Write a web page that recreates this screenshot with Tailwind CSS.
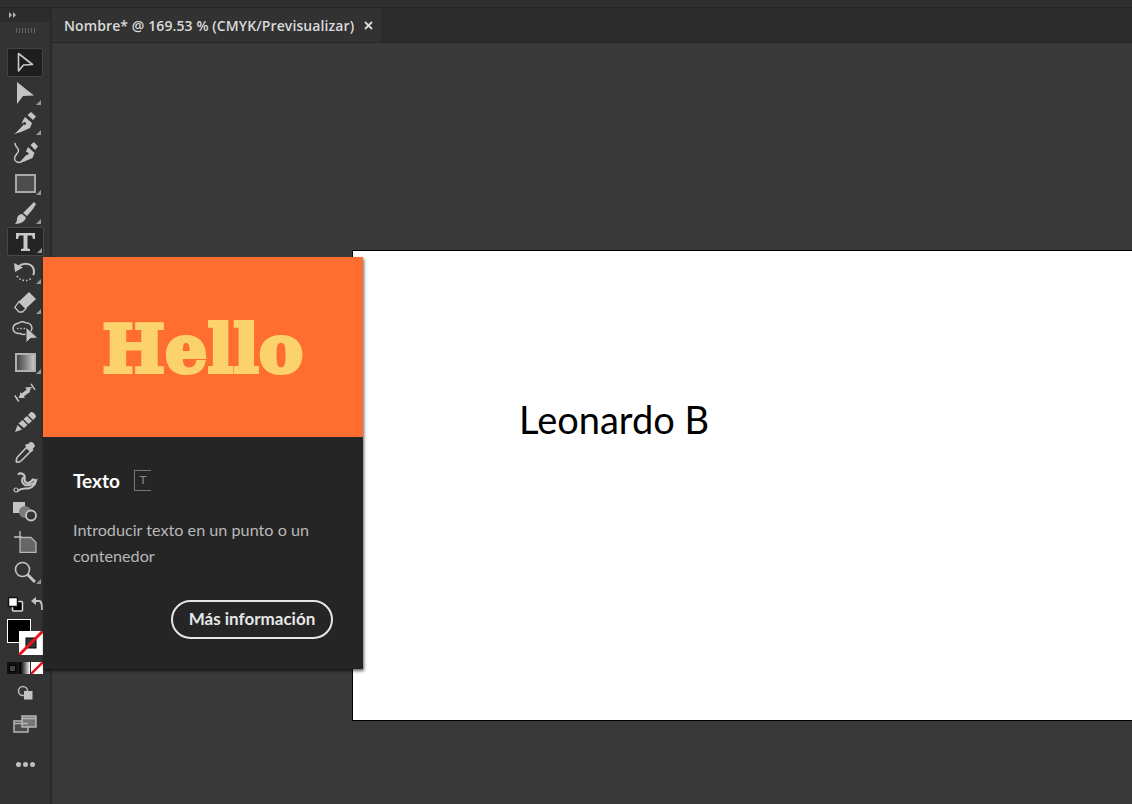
<!DOCTYPE html>
<html lang="es">
<head>
<meta charset="utf-8">
<script src="https://cdn.jsdelivr.net/npm/@tailwindcss/browser@4"></script>
<title>Illustrator</title>
</head>
<body class="m-0 overflow-hidden bg-[#393939]">
<div class="relative flex flex-col w-[1132px] h-[804px] overflow-hidden bg-[#393939] font-['Open_Sans',sans-serif]">
  <div class="h-[8px] shrink-0 bg-[#2f2f2f] border-b border-[#262626]"></div>
  <div class="flex flex-1 min-h-0">
    <!-- toolbar -->
    <aside class="w-[52px] shrink-0 flex flex-col bg-[#333333] border-r-2 border-[#2a2a2a] text-[#c2c2c2]">
      <div class="h-[14px] bg-[#2b2b2b] flex items-center pl-[9px] text-[#b5b5b5]">
        <svg width="8" height="6" viewBox="0 0 8 6" fill="currentColor"><path d="M0 0l3 3-3 3zM4 0l3 3-3 3z"/></svg>
      </div>
      <div class="h-[14px] mt-[1px] flex items-center justify-center gap-[2px]">
        <span class="w-[1px] h-[5px] bg-[#666]"></span><span class="w-[1px] h-[5px] bg-[#666]"></span><span class="w-[1px] h-[5px] bg-[#666]"></span><span class="w-[1px] h-[5px] bg-[#666]"></span><span class="w-[1px] h-[5px] bg-[#666]"></span><span class="w-[1px] h-[5px] bg-[#666]"></span><span class="w-[1px] h-[5px] bg-[#666]"></span>
      </div>
      <div class="flex flex-col items-center mt-[11px]">
        <!-- selection -->
        <div class="w-[36px] h-[29px] rounded-[2px] bg-[#1e1e1e] border border-[#444] flex items-center justify-center mb-[1px]">
          <svg width="17" height="21" viewBox="0 0 17 21" fill="none" stroke="#c8c8c8" stroke-width="1.600"><path d="M1.500 1.500V19l5-6 9-.5z" stroke-linejoin="round"/></svg>
        </div>
        <!-- direct -->
        <div class="relative w-[36px] h-[30px] flex items-center justify-center">
          <svg width="17" height="22" viewBox="0 0 17 22" fill="#c4c4c4"><path d="M0 0V22l6-8 11-.5z"/></svg>
          <span class="absolute right-[2px] bottom-[3px] w-0 h-0 border-l-[5px] border-l-transparent border-b-[5px] border-b-[#999]"></span>
        </div>
        <!-- pen -->
        <div class="relative w-[36px] h-[30px] flex items-center justify-center">
          <svg width="22" height="22" viewBox="0 0 22 22"><path d="M13.500 3L17 0l5 4.500-3 3.500z" fill="#c4c4c4"/><path d="M11 5l7 6-2 5-9 4-7 2 9-9.500-1-2.500z" fill="#c4c4c4"/><path d="M1 21l8.500-8.500" stroke="#333" stroke-width="1"/><circle cx="10.500" cy="11.500" r="1.500" fill="#333"/></svg>
          <span class="absolute right-[2px] bottom-[3px] w-0 h-0 border-l-[5px] border-l-transparent border-b-[5px] border-b-[#999]"></span>
        </div>
        <!-- curvature -->
        <div class="relative w-[36px] h-[30px] flex items-center justify-center">
          <svg width="25" height="22" viewBox="0 0 25 22"><path d="M17.500 3L21 0l4 4.500-3 3.500z" fill="#c4c4c4"/><path d="M15 5l6.500 6-2 5-8 3.500-5.500 1.500 8-9-1-2.500z" fill="#c4c4c4"/><path d="M5 20.500l7.500-8" stroke="#333" stroke-width="1"/><circle cx="14" cy="11.500" r="1.500" fill="#333"/><path d="M2.500 1c-2 3 3.500 4.500 3 8-.5 3-4.500 4-4 8 .5 3 4 4 7 3" fill="none" stroke="#c4c4c4" stroke-width="1.500"/></svg>
        </div>
        <!-- rectangle -->
        <div class="relative w-[36px] h-[30px] flex items-center justify-center">
          <span class="block w-[21px] h-[19px] bg-[#4d4d4d] border-2 border-[#a8a8a8]"></span>
          <span class="absolute right-[2px] bottom-[3px] w-0 h-0 border-l-[5px] border-l-transparent border-b-[5px] border-b-[#999]"></span>
        </div>
        <!-- brush -->
        <div class="relative w-[36px] h-[29px] flex items-center justify-center">
          <svg width="21" height="22" viewBox="0 0 21 22" fill="#c4c4c4"><path d="M19 0l2 2-3 5-6 7-4-3 6-6zM7 12l4 3.500c-1 3-3 6-11 6.500 1-1 2-3 2-5s2-5 5-5z"/></svg>
          <span class="absolute right-[2px] bottom-[3px] w-0 h-0 border-l-[5px] border-l-transparent border-b-[5px] border-b-[#999]"></span>
        </div>
        <!-- type -->
        <div class="relative w-[37px] h-[29px] rounded-[2px] bg-[#242424] border border-[#484848] flex items-center justify-center mb-[1px]">
          <svg width="19" height="18" viewBox="0 0 19 18" fill="#c8c8c8"><path d="M0 0h19v6h-2l-1-3.500h-4.500V15.500l2.500 .5v2H5v-2l2.500-.5V2.500H3L2 6H0z"/></svg>
          <span class="absolute right-[1px] bottom-[2px] w-0 h-0 border-l-[5px] border-l-transparent border-b-[5px] border-b-[#999]"></span>
        </div>
        <!-- rotate -->
        <div class="relative w-[36px] h-[30px] flex items-center justify-center">
          <svg width="22" height="22" viewBox="0 0 22 22" fill="none" stroke="#c4c4c4" stroke-width="2"><path d="M5 5c5-4 15-3 15 6 0 1 0 2-1 3"/><path d="M0 2l1 9 8-4.500z" fill="#c4c4c4" stroke="none"/><path d="M3 15c3 5 10 6 15 2" stroke-width="1.600" stroke-dasharray="1.500 2"/></svg>
          <span class="absolute right-[2px] bottom-[3px] w-0 h-0 border-l-[5px] border-l-transparent border-b-[5px] border-b-[#999]"></span>
        </div>
        <!-- eraser -->
        <div class="relative w-[36px] h-[30px] flex items-center justify-center">
          <svg width="22" height="21" viewBox="0 0 22 21"><path d="M15 0l7 7-10 9.500L5 9.500z" fill="#c4c4c4"/><path d="M5 9.500l7 7-3.500 3.500H5L.8 15.500z" fill="none" stroke="#c4c4c4" stroke-width="1.300"/></svg>
          <span class="absolute right-[2px] bottom-[3px] w-0 h-0 border-l-[5px] border-l-transparent border-b-[5px] border-b-[#999]"></span>
        </div>
        <!-- shape builder -->
        <div class="relative w-[36px] h-[30px] flex items-center justify-center">
          <svg width="26" height="22" viewBox="0 0 26 22" fill="none" stroke="#c4c4c4" stroke-width="1.500"><path d="M7 2c2-1.500 5-1.500 7 0 4-.5 6 2.500 6 5.500-1 4-4 6-8 6-2 0-3-.5-4-1-4 .5-7-2-7-5s3-5 6-5.500z"/><path d="M5 7.500h8" stroke-dasharray="1.500 1.800"/><path d="M14 6v16l4.500-4.500 7.500-.5z" fill="#c4c4c4" stroke="#333" stroke-width="1"/></svg>
        </div>
        <!-- gradient -->
        <div class="relative w-[36px] h-[30px] flex items-center justify-center">
          <span class="block w-[21px] h-[19px] border-2 border-[#b0b0b0] bg-gradient-to-r from-[#444444] to-[#c8c8c8]"></span>
          <span class="absolute right-[2px] bottom-[3px] w-0 h-0 border-l-[5px] border-l-transparent border-b-[5px] border-b-[#999]"></span>
        </div>
        <!-- width -->
        <div class="relative w-[36px] h-[30px] flex items-center justify-center">
          <svg width="22" height="19" viewBox="0 0 22 19" fill="none" stroke="#c4c4c4"><path d="M.8 12.500l4 6M17 .8l4 6" stroke-width="1.500"/><path d="M3 15.500L19 3.500" stroke-width="1" stroke-dasharray="1.500 1"/><path d="M8 12.500l6-4.500" stroke-width="3.500"/><path d="M5 15l1.500-6 4.500 6zM17 4l-1.500 6L11 4.500z" fill="#c4c4c4" stroke="none"/></svg>
        </div>
        <!-- blend stripes -->
        <div class="relative w-[36px] h-[30px] flex items-center justify-center">
          <svg width="21" height="20" viewBox="0 0 21 20" fill="#c4c4c4"><path d="M0 20l2.500-7 4.500 4.500zM3.500 11.500l4-3.500 5 5-3.500 3zM8.500 7l3.500-3 5 5-3.500 3zM13 3l3-3c2 0 5 2 5 5l-3 3z"/></svg>
        </div>
        <!-- eyedropper -->
        <div class="relative w-[36px] h-[30px] flex items-center justify-center">
          <svg width="21" height="22" viewBox="0 0 21 22"><path d="M14.500 1.500c2-2 6.500 1.500 5 4.500l-2 2 1 1-2 2-6.500-6.500 2-2 1 1z" fill="#c4c4c4"/><path d="M11.500 6.500l4 4-9 9c-2 2-3 2-5 1.500-.5-2-.5-3 1-5z" fill="none" stroke="#c4c4c4" stroke-width="1.600"/></svg>
        </div>
        <!-- symbol sprayer -->
        <div class="relative w-[36px] h-[30px] flex items-center justify-center">
          <svg width="25" height="21" viewBox="0 0 25 21" fill="none" stroke="#c4c4c4" stroke-width="2.200"><path d="M5 2.500c2-2 6-1 6.500 1.500s-1 5 1.500 6.500 5-.5 7-3l3 1"/><path d="M10 5c-1 3-2 6 2 8 4 1 8-1 11-4-1 5-6 8-11 7.500-2.500 0-5 .5-7.500 2.500" stroke-width="2"/><circle cx="3" cy="18" r="2" fill="#333" stroke-width="1.200"/></svg>
        </div>
        <!-- shapes -->
        <div class="relative w-[36px] h-[30px] flex items-center justify-center">
          <svg width="24" height="20" viewBox="0 0 24 20"><rect x="0" y="0" width="12" height="11" fill="#c4c4c4"/><circle cx="12" cy="10" r="6" fill="#7a7a7a"/><circle cx="18" cy="13.500" r="5" fill="#333" stroke="#c4c4c4" stroke-width="1.800"/></svg>
        </div>
        <!-- artboard -->
        <div class="relative w-[36px] h-[30px] flex items-center justify-center">
          <svg width="23" height="22" viewBox="0 0 23 22"><path d="M0 6h8M6 0v8" stroke="#c4c4c4" stroke-width="1.300"/><path d="M6 6.500h11l5 5v10H6z" fill="#666" stroke="#b5b5b5" stroke-width="1.300"/></svg>
        </div>
        <!-- zoom -->
        <div class="relative w-[36px] h-[30px] flex items-center justify-center">
          <svg width="22" height="22" viewBox="0 0 22 22" fill="none" stroke="#c4c4c4"><circle cx="8.500" cy="8.500" r="7" stroke-width="1.600"/><path d="M13.500 13.500l7.500 7.500" stroke-width="3"/></svg>
          <span class="absolute right-[2px] bottom-[3px] w-0 h-0 border-l-[5px] border-l-transparent border-b-[5px] border-b-[#999]"></span>
        </div>
        <!-- swaps -->
        <div class="w-[36px] h-[22px] mt-[6px] flex items-center justify-between">
          <svg width="17" height="16" viewBox="0 0 17 16"><rect x="5.500" y="5.500" width="10" height="9.500" rx="1" fill="#000" stroke="#ddd" stroke-width="1.500"/><rect x="1.500" y="1.500" width="9" height="9" rx="1" fill="#fff" stroke="#111" stroke-width="1.500"/></svg>
          <svg width="12" height="15" viewBox="0 0 12 15" fill="none" stroke="#c4c4c4" stroke-width="1.800"><path d="M4 4h4c3 0 3 4 3 9"/><path d="M5 0v8L0 4z" fill="#c4c4c4" stroke="none"/></svg>
        </div>
        <!-- fill/stroke -->
        <div class="relative w-[36px] h-[48px] mt-[1px]">
          <span class="absolute left-0 top-[3px] w-[24px] h-[24px] bg-black border border-white"></span>
          <svg class="absolute left-[12px] top-[15px]" width="24" height="24" viewBox="0 0 24 24"><rect width="24" height="24" fill="#fff"/><rect x="7" y="7" width="10" height="10" fill="#333" stroke="#000"/><path d="M0 24L24 0" stroke="#e8141c" stroke-width="3"/></svg>
        </div>
        <!-- modes -->
        <div class="flex w-[36px] h-[12px] gap-[1px] bg-[#222] mt-[-2px]">
          <span class="w-[11px] h-[12px] bg-[#111] flex items-center justify-center"><span class="block w-[7px] h-[7px] bg-[#444] border border-black"></span></span>
          <span class="w-[11px] h-[12px] bg-gradient-to-r from-black to-white"></span>
          <svg width="12" height="12" viewBox="0 0 12 12"><rect width="12" height="12" fill="#fff"/><path d="M0 12L12 0" stroke="#e8141c" stroke-width="2.500"/></svg>
        </div>
        <!-- draw mode -->
        <div class="h-[30px] w-[36px] mt-[3px] flex items-center justify-center">
          <svg width="16" height="15" viewBox="0 0 16 15"><circle cx="6" cy="6" r="4.500" fill="none" stroke="#bbb" stroke-width="1.500"/><rect x="7" y="6" width="8.500" height="8.500" fill="#c4c4c4"/></svg>
        </div>
        <!-- screen mode -->
        <div class="h-[30px] w-[36px] mt-[2px] flex items-center justify-center">
          <svg width="24" height="18" viewBox="0 0 24 18" fill="none" stroke="#b5b5b5" stroke-width="1.500"><rect x="1" y="6" width="14" height="11" fill="#4a4a4a"/><rect x="9" y="1" width="14" height="11" fill="#777"/><path d="M1 8.500h14M9 3.500h14"/></svg>
        </div>
        <!-- more -->
        <div class="h-[30px] w-[36px] mt-[10px] flex items-center justify-center gap-[2px]">
          <span class="w-[5px] h-[5px] rounded-full bg-[#c0c0c0]"></span>
          <span class="w-[5px] h-[5px] rounded-full bg-[#c0c0c0]"></span>
          <span class="w-[5px] h-[5px] rounded-full bg-[#c0c0c0]"></span>
        </div>
      </div>
    </aside>
    <!-- document -->
    <main class="flex-1 min-w-0 flex flex-col">
      <div class="h-[35px] shrink-0 flex bg-[#2b2b2b] border-b border-[#262626]">
        <div class="w-[329px] flex items-center bg-[#323232] pl-[12px] pt-[1px] gap-[10px] text-[#dadada]">
          <span class="text-[14px] font-semibold whitespace-nowrap leading-none tracking-[0.1px]">Nombre* @ 169.53 % (CMYK/Previsualizar)</span>
          <svg width="9" height="9" viewBox="0 0 9 9" fill="none" stroke="#dcdcdc" stroke-width="1.800"><path d="M1 1l7 7M8 1l-7 7"/></svg>
        </div>
      </div>
      <div class="flex-1 bg-[#393939] pt-[207px] pl-[300px]">
        <div class="w-[800px] h-[471px] bg-white border border-black pl-[166px] pt-[143px]">
          <p class="text-[38px] leading-[50px] text-black whitespace-nowrap font-['Lato',sans-serif]">Leonardo B</p>
        </div>
      </div>
    </main>
  </div>
  <!-- popover -->
  <div class="absolute left-[43px] top-[257px] w-[320px] h-[412px] bg-[#252525] shadow-[1px_2px_3px_rgba(0,0,0,0.6)] flex flex-col font-['Lato',sans-serif]">
    <div class="h-[180px] shrink-0 bg-[#ff6e30] flex items-center justify-center pt-[3px]">
      <span class="text-[#fbd26b] text-[66px] leading-none font-bold font-['DejaVu_Serif',serif] tracking-[0.5px] [-webkit-text-stroke:4px_#fbd26b]">Hello</span>
    </div>
    <div class="flex-1 px-[30px] pt-[30px]">
      <div class="flex items-center gap-[14px] h-[26px]">
        <span class="text-[19px] font-bold leading-none text-white">Texto</span>
        <span class="relative block w-[17px] h-[21px] border-l border-y border-[#777] flex items-center justify-center text-[12px] text-[#888] leading-none">T</span>
      </div>
      <p class="mt-[24px] text-[16.2px] leading-[26px] text-[#b8b8b8] w-[255px]">Introducir texto en un punto o un contenedor</p>
      <div class="flex justify-end mt-[31px]">
        <button class="w-[162px] h-[39px] rounded-full border-2 border-[#e6e6e6] text-[17px] font-bold text-[#e6e6e6] leading-none pb-[3px]">Más información</button>
      </div>
    </div>
  </div>
</div>
</body>
</html>
